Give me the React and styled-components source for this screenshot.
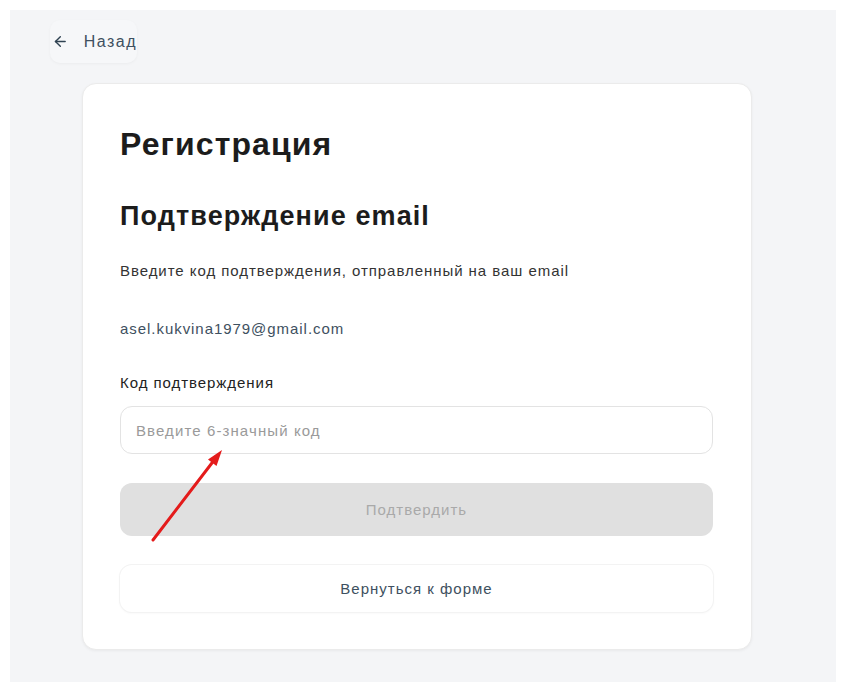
import React from 'react';
import styled, { createGlobalStyle } from 'styled-components';
import { ArrowLeft } from 'lucide-react';

const GlobalStyle = createGlobalStyle`
    html, body {
        margin: 0;
        padding: 0;
        background: #ffffff;
    }
    body {
        font-family: "Liberation Sans", Arial, sans-serif;
    }
`;

const Page = styled.div`
    padding: 10px 18px 14px 10px;
`;

const Backdrop = styled.div`
    background: #f4f5f7;
    min-height: 672px;
    box-sizing: border-box;
    padding: 10px 84px 0 40px;
`;

const BackButton = styled.button`
    display: inline-flex;
    align-items: center;
    gap: 15px;
    height: 43px;
    width: 87px;
    padding: 0 0 0 2px;
    border: none;
    border-radius: 10px;
    background: #f6f7f9;
    box-shadow: 0 1px 3px rgba(0, 0, 0, 0.04);
    color: #3e5060;
    font-family: "Liberation Sans", Arial, sans-serif;
    font-size: 16px;
    letter-spacing: 1.5px;
    white-space: nowrap;
    cursor: pointer;
`;

const Card = styled.div`
    position: relative;
    margin: 20px 0 0 32px;
    background: #ffffff;
    border: 1px solid #ebebeb;
    border-radius: 14px;
    box-shadow: 0 1px 3px rgba(0, 0, 0, 0.05);
    padding: 41px 38px 37px 37px;
`;

const Title = styled.h1`
    margin: 0;
    font-size: 32px;
    font-weight: 700;
    letter-spacing: 1.1px;
    color: #1c1c1c;
    line-height: 38px;
`;

const Subtitle = styled.h2`
    margin: 37px 0 0;
    font-size: 27px;
    font-weight: 700;
    letter-spacing: 1.1px;
    color: #1c1c1c;
    line-height: 32px;
`;

const Text = styled.p`
    margin: ${props => props.top}px 0 0;
    font-size: 15px;
    letter-spacing: 0.95px;
    line-height: 18px;
    color: ${props => props.color || '#333333'};
`;

const Input = styled.input`
    display: block;
    box-sizing: border-box;
    width: 100%;
    height: 48px;
    margin-top: 14px;
    padding: 0 15px;
    border: 1px solid #e3e3e3;
    border-radius: 12px;
    font-family: "Liberation Sans", Arial, sans-serif;
    font-size: 15px;
    letter-spacing: 1.1px;
    color: #333;
    outline: none;
    &::placeholder {
        color: #9a9a9a;
    }
`;

const Button = styled.button`
    display: block;
    box-sizing: border-box;
    width: 100%;
    height: ${props => props.h}px;
    margin-top: ${props => props.top}px;
    border: none;
    border-radius: 12px;
    font-family: "Liberation Sans", Arial, sans-serif;
    font-size: 15px;
    letter-spacing: 1px;
    background: ${props => props.muted ? '#e0e0e0' : '#ffffff'};
    color: ${props => props.muted ? '#a9a9a9' : '#3e5060'};
    box-shadow: ${props => props.muted ? 'none' : '0 0 0 1px #f3f3f3, 0 1px 3px rgba(0,0,0,0.05)'};
`;

const Pointer = styled.svg`
    position: absolute;
    left: 60px;
    top: 358px;
    pointer-events: none;
`;

export default function App() {
    return (
        <>
            <GlobalStyle />
            <Page>
                <Backdrop>
                    <BackButton>
                        <ArrowLeft size={17} strokeWidth={2} color="#2f4252" />
                        Назад
                    </BackButton>
                    <Card>
                        <Title>Регистрация</Title>
                        <Subtitle>Подтверждение email</Subtitle>
                        <Text top={30}>Введите код подтверждения, отправленный на ваш email</Text>
                        <Text top={40} color="#3e5060">asel.kukvina1979@gmail.com</Text>
                        <Text top={36} color="#222222">Код подтверждения</Text>
                        <Input placeholder="Введите 6-значный код" />
                        <Button muted h={53} top={29}>Подтвердить</Button>
                        <Button h={47} top={29}>Вернуться к форме</Button>
                        <Pointer width="90" height="100" viewBox="0 0 90 100">
                            <line x1="10" y1="98" x2="72" y2="17" stroke="#e41b1b" strokeWidth="3" strokeLinecap="round" />
                            <polygon points="79,8 73.5,24 65,17.5" fill="#e41b1b" />
                        </Pointer>
                    </Card>
                </Backdrop>
            </Page>
        </>
    );
}
